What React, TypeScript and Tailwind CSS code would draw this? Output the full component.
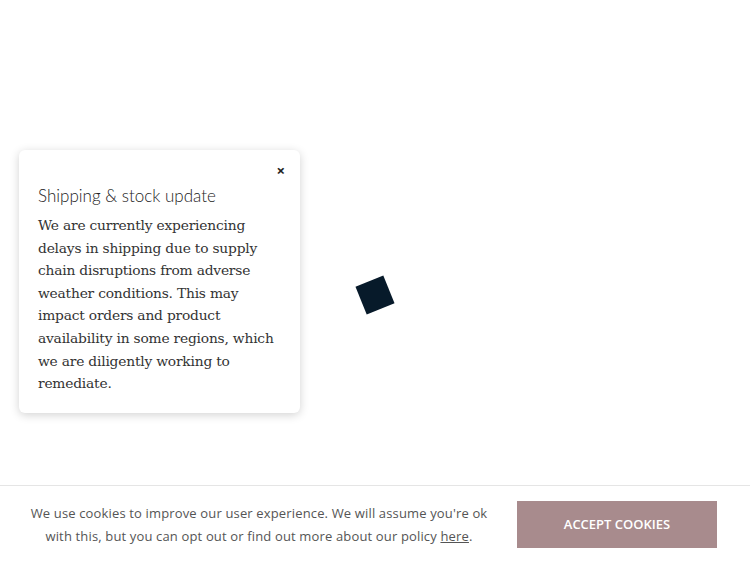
import React from 'react';

function ShippingNotice() {
  return (
    <div className="relative w-[281px] rounded-md bg-white px-[19px] pt-[33px] pb-[18px] shadow-[0_2px_10px_rgba(0,0,0,0.18)]">
      <button className="absolute right-[15px] top-[13px] text-[15px] font-bold leading-none text-[#222]">×</button>
      <h2 className="font-['Lato',sans-serif] text-[17px] font-light leading-[26px] text-[#222]">Shipping &amp; stock update</h2>
      <p className="mt-[5px] font-['DejaVu_Serif',serif] text-[13.8px] leading-[22.6px] text-[#333] tracking-[-0.2px]">
        We are currently experiencing delays in shipping due to supply chain disruptions from adverse weather conditions. This may impact orders and product availability in some regions, which we are diligently working to remediate.
      </p>
    </div>
  );
}

function CookieBar() {
  return (
    <div className="flex items-center border-t border-[#e5e5e5] bg-white pl-[22px] pr-[33px] h-[78px]">
      <p className="w-[474px] text-center font-['Open_Sans',sans-serif] text-[13px] leading-[23px] tracking-[0.15px] text-[#555]">
        We use cookies to improve our user experience. We will assume you're ok with this, but you can opt out or find out more about our policy <a className="underline">here</a>.
      </p>
      <button className="ml-auto h-[47px] w-[200px] bg-[#a88b8d] font-['Open_Sans',sans-serif] text-[13px] font-semibold text-white">
        ACCEPT COOKIES
      </button>
    </div>
  );
}

export default function App() {
  return (
    <div className="relative flex h-[563px] w-[750px] flex-col bg-white">
      <div className="flex-1 pl-[19px] pt-[150px]">
        <ShippingNotice />
      </div>
      <div className="absolute left-[360px] top-[280px] h-[30px] w-[30px] rotate-[-22deg] bg-[#071a2a]" />
      <CookieBar />
    </div>
  );
}
